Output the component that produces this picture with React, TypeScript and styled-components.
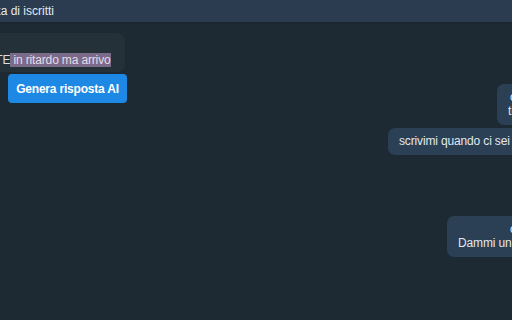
import styled, { createGlobalStyle } from "styled-components";

const GlobalStyle = createGlobalStyle`
  html, body {
    margin: 0;
    padding: 0;
    width: 512px;
    height: 320px;
    overflow: hidden;
    background: #1e2a33;
    font-family: "Liberation Sans", Arial, sans-serif;
  }
`;

const Screen = styled.div`
  width: 512px;
  height: 320px;
  display: flex;
  flex-direction: column;
  overflow: hidden;
  background: #1e2a33;
`;

const Header = styled.header`
  height: 22px;
  flex-shrink: 0;
  display: flex;
  align-items: center;
  background: #2b3b50;
  border-bottom: 2px solid #1b262e;
  color: #e3e9ef;
  font-size: 12px;
  white-space: nowrap;
`;

const HeaderTitle = styled.span`
  margin-left: -18px;
`;

const Chat = styled.div`
  flex: 1;
  display: flex;
  flex-direction: column;
  padding-top: 9px;
`;

const IncomingRow = styled.div`
  position: relative;
  align-self: flex-start;
  margin-left: -186px;
`;

const IncomingBubble = styled.div`
  background: #253138;
  border-radius: 8px;
  padding: 19px 14px 3px 16px;
  color: #d9dfe4;
  font-size: 12px;
  line-height: 17px;
  letter-spacing: -0.15px;
  white-space: nowrap;
`;

const Selected = styled.span`
  background: #7c6a89;
  color: #e4dde8;
`;

const AiButton = styled.button`
  position: absolute;
  top: calc(100% + 2px);
  left: 194px;
  width: 119px;
  height: 29px;
  border: none;
  border-radius: 4px;
  background: #1e88e5;
  color: #ffffff;
  font-family: "Liberation Sans", Arial, sans-serif;
  font-weight: 700;
  font-size: 12px;
  letter-spacing: -0.2px;
  cursor: pointer;
`;

const OutgoingBubble = styled.div<{ $gap: number; $left: number }>`
  margin-top: ${({ $gap }) => $gap}px;
  margin-left: ${({ $left }) => $left}px;
  width: 300px;
  background: #2b3f55;
  border-radius: 7px;
  padding: 6px 11px 7px;
  color: #e2e8ee;
  font-size: 12px;
  line-height: 14px;
  letter-spacing: -0.15px;
  white-space: nowrap;
`;

const Line = styled.span<{ $indent?: number }>`
  display: block;
  padding-left: ${({ $indent }) => $indent ?? 0}px;
`;

export default function App() {
  return (
    <>
      <GlobalStyle />
      <Screen>
        <Header>
          <HeaderTitle>Lista di iscritti</HeaderTitle>
        </Header>
        <Chat>
          <IncomingRow>
            <IncomingBubble>
              CIAO SCUSA, SONO PRESENTE<Selected> in ritardo ma arrivo</Selected>
            </IncomingBubble>
            <AiButton>Genera risposta AI</AiButton>
          </IncomingRow>
          <OutgoingBubble $gap={12} $left={497}>
            <Line $indent={2}>ok nessun problema</Line>
            <Line>ti aspetto qui</Line>
          </OutgoingBubble>
          <OutgoingBubble $gap={3} $left={388}>
            <Line>scrivimi quando ci sei così scendo</Line>
          </OutgoingBubble>
          <OutgoingBubble $gap={61} $left={447}>
            <Line $indent={52}>ok perfetto</Line>
            <Line>Dammi un minuto</Line>
          </OutgoingBubble>
        </Chat>
      </Screen>
    </>
  );
}
